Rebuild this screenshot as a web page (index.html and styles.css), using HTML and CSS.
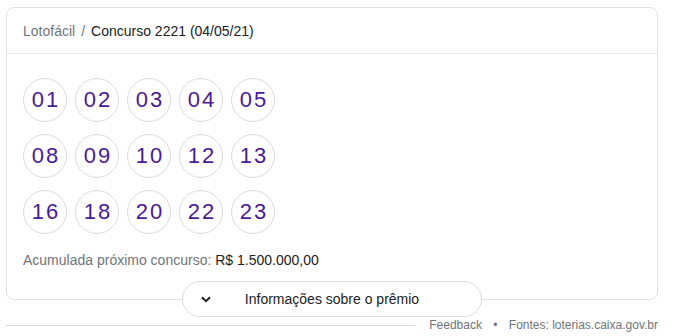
FILE: index.html
```html
<!DOCTYPE html>
<html lang="pt-BR">
<head>
    <meta charset="UTF-8">
    <title>Lotofácil - Concurso 2221</title>
    <link rel="stylesheet" href="styles.css">
</head>
<body>
    <div class="lottery">
        <!-- Result card -->
        <div class="result-card">
            <div class="card-header">
                <span class="game">Lotofácil</span>
                <span class="sep">/</span>
                <span class="draw">Concurso 2221 (04/05/21)</span>
            </div>

            <div class="card-body">
                <div class="balls">
                    <span class="ball">01</span>
                    <span class="ball">02</span>
                    <span class="ball">03</span>
                    <span class="ball">04</span>
                    <span class="ball">05</span>
                    <span class="ball">08</span>
                    <span class="ball">09</span>
                    <span class="ball">10</span>
                    <span class="ball">12</span>
                    <span class="ball">13</span>
                    <span class="ball">16</span>
                    <span class="ball">18</span>
                    <span class="ball">20</span>
                    <span class="ball">22</span>
                    <span class="ball">23</span>
                </div>

                <p class="jackpot">Acumulada próximo concurso: <span class="amount">R$ 1.500.000,00</span></p>
            </div>
        </div>

        <!-- Expand button -->
        <button class="prize-toggle">
            <svg class="chevron" width="10" height="7" viewBox="0 0 10 7">
                <path d="M1 1.2 L5 5.2 L9 1.2" fill="none" stroke="#202124" stroke-width="2"/>
            </svg>
            <span class="toggle-label">Informações sobre o prêmio</span>
        </button>

        <!-- Footer -->
        <div class="source-row">
            <div class="rule"></div>
            <span class="links">Feedback <span class="dot">•</span> Fontes: loterias.caixa.gov.br</span>
        </div>
    </div>
</body>
</html>
```

FILE: styles.css
```css
/* Global */
body {
    margin: 0;
    font-family: "Liberation Sans", Arial, sans-serif;
    background-color: #fff;
    color: #202124;
}

.lottery {
    width: 652px;
    margin: 7px 0 0 6px;
}

/* Card */
.result-card {
    border: 1px solid #dfe1e5;
    border-radius: 8px;
}

.card-header {
    height: 45px;
    display: flex;
    align-items: center;
    padding: 0 16px;
    font-size: 14px;
    border-bottom: 1px solid #ebebeb;
}

.card-header .game {
    color: #70757a;
}

.card-header .sep {
    color: #70757a;
    margin: 0 6px;
}

.card-body {
    padding: 24px 16px 29px;
}

/* Balls */
.balls {
    display: grid;
    grid-template-columns: repeat(5, 44px);
    gap: 12px 8px;
}

.ball {
    width: 42px;
    height: 42px;
    border: 1px solid #dadce0;
    border-radius: 50%;
    display: flex;
    align-items: center;
    justify-content: center;
    font-size: 22px;
    letter-spacing: 2px;
    padding-left: 2px;
    box-sizing: content-box;
    color: #4a1a96;
}

.ball {
    width: 40px;
}

.jackpot {
    margin: 16px 0 0;
    font-size: 14px;
    line-height: 20px;
    color: #70757a;
}

.jackpot .amount {
    color: #202124;
}

/* Toggle button */
.prize-toggle {
    display: flex;
    align-items: center;
    width: 300px;
    height: 36px;
    margin: -19px auto 0;
    padding: 0 0 0 18px;
    border: 1px solid #dadce0;
    border-radius: 18px;
    background-color: #fff;
    font-family: inherit;
    font-size: 14px;
    color: #202124;
    cursor: pointer;
}

.chevron {
    flex: none;
}

.toggle-label {
    flex: 1;
    text-align: center;
    padding-right: 28px;
}

/* Footer */
.source-row {
    display: flex;
    align-items: center;
    height: 14px;
    margin-top: 1px;
    font-size: 12px;
    color: #70757a;
}

.rule {
    flex: 1;
    border-top: 1px solid #dadce0;
    margin-right: 14px;
}

.links .dot {
    margin: 0 8px;
}
```
